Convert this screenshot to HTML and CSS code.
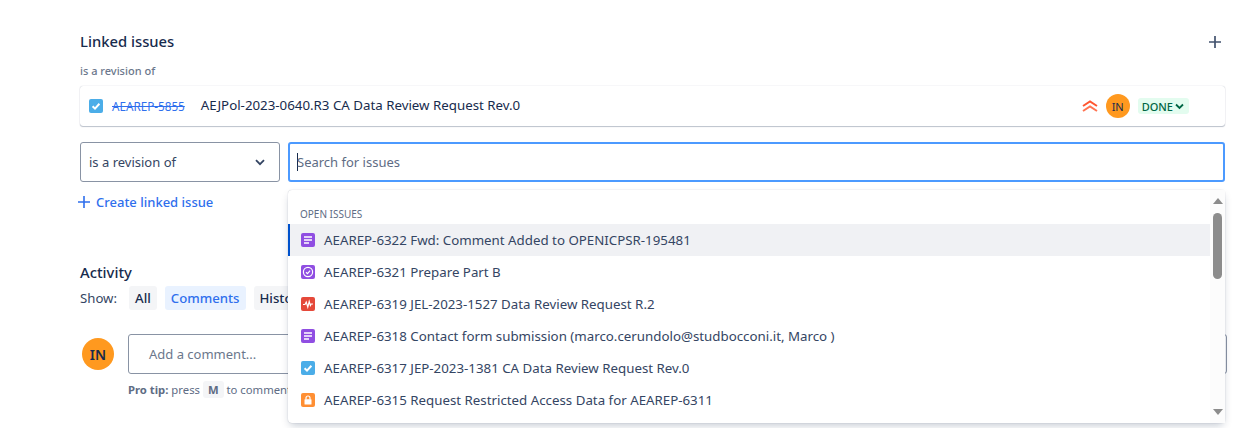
FILE: index.html
```html
<!DOCTYPE html>
<html lang="en">
<head>
    <meta charset="UTF-8">
    <meta name="viewport" content="width=device-width, initial-scale=1.0">
    <title>Linked issues</title>
    <link rel="stylesheet" href="styles.css">
</head>
<body>
    <div class="page">
      <section class="linked">
        <div class="linked-head">
          <h2>Linked issues</h2>
          <svg class="add-icon" width="14" height="14" viewBox="0 0 14 14"><path d="M7 1v12M1 7h12" stroke="#42526e" stroke-width="1.7" fill="none"/></svg>
        </div>
        <div class="relation">is a revision of</div>
        <div class="issue-card">
          <span class="type type-task">
            <svg width="14" height="14" viewBox="0 0 14 14"><path d="M3.6 7.2l2.4 2.4 4.4-4.8" stroke="#fff" stroke-width="2" fill="none"/></svg>
          </span>
          <a class="issue-key">AEAREP-5855</a>
          <span class="issue-title">AEJPol-2023-0640.R3 CA Data Review Request Rev.0</span>
          <svg class="priority" width="18" height="14" viewBox="0 0 18 14"><path d="M2 7l7-4.5L16 7" stroke="#ff5630" stroke-width="2" fill="none"/><path d="M2 12l7-4.5L16 12" stroke="#ff7452" stroke-width="2" fill="none"/></svg>
          <span class="avatar avatar-small">IN</span>
          <span class="status">DONE
            <svg width="9" height="7" viewBox="0 0 9 7"><path d="M1 1.5l3.5 3.5L8 1.5" stroke="#006644" stroke-width="1.8" fill="none"/></svg>
          </span>
        </div>
        <div class="link-form">
          <div class="select">
            <span>is a revision of</span>
            <svg width="10" height="7" viewBox="0 0 10 7"><path d="M1 1.2l4 4 4-4" stroke="#344563" stroke-width="1.8" fill="none"/></svg>
          </div>
          <div class="search">
            <span class="caret"></span>
            <span>Search for issues</span>
          </div>
          <div class="menu">
            <div class="menu-list">
              <div class="menu-label">OPEN ISSUES</div>
              <div class="menu-item active">
                <span class="type type-story"><svg width="14" height="14" viewBox="0 0 14 14"><path d="M3 4h8M3 7h8M3 10h5" stroke="#fff" stroke-width="1.4" fill="none"/></svg></span>
                <span>AEAREP-6322 Fwd: Comment Added to OPENICPSR-195481</span>
              </div>
              <div class="menu-item">
                <span class="type type-story"><svg width="14" height="14" viewBox="0 0 14 14"><circle cx="7" cy="7" r="4.6" stroke="#fff" stroke-width="1.2" fill="none"/><path d="M5 7.2l1.5 1.4 2.6-3" stroke="#fff" stroke-width="1.2" fill="none"/></svg></span>
                <span>AEAREP-6321 Prepare Part B</span>
              </div>
              <div class="menu-item">
                <span class="type type-bug"><svg width="14" height="14" viewBox="0 0 14 14"><path d="M2 7.5h2l1.2-2.5 1.6 5 1.4-5.5 1.2 4 .8-1.5H12" stroke="#fff" stroke-width="1.2" fill="none"/></svg></span>
                <span>AEAREP-6319 JEL-2023-1527 Data Review Request R.2</span>
              </div>
              <div class="menu-item">
                <span class="type type-story"><svg width="14" height="14" viewBox="0 0 14 14"><path d="M3 4h8M3 7h8M3 10h5" stroke="#fff" stroke-width="1.4" fill="none"/></svg></span>
                <span>AEAREP-6318 Contact form submission (marco.cerundolo@studbocconi.it, Marco )</span>
              </div>
              <div class="menu-item">
                <span class="type type-task"><svg width="14" height="14" viewBox="0 0 14 14"><path d="M3.6 7.2l2.4 2.4 4.4-4.8" stroke="#fff" stroke-width="2" fill="none"/></svg></span>
                <span>AEAREP-6317 JEP-2023-1381 CA Data Review Request Rev.0</span>
              </div>
              <div class="menu-item">
                <span class="type type-access"><svg width="14" height="14" viewBox="0 0 14 14"><rect x="3.5" y="6.2" width="7" height="5.3" rx=".6" fill="#fff"/><path d="M5 6.5V5a2 2 0 0 1 4 0v1.5" stroke="#fff" stroke-width="1.2" fill="none"/></svg></span>
                <span>AEAREP-6315 Request Restricted Access Data for AEAREP-6311</span>
              </div>
            </div>
            <div class="scrollbar">
              <span class="arrow-up"></span>
              <span class="thumb"></span>
              <span class="arrow-down"></span>
            </div>
          </div>
        </div>
        <a class="create-link">
          <svg width="12" height="12" viewBox="0 0 12 12"><path d="M6 0v12M0 6h12" stroke="#2f6fed" stroke-width="1.6" fill="none"/></svg>
          Create linked issue
        </a>
      </section>

      <section class="activity">
        <h3>Activity</h3>
        <div class="show-row">
          <span class="show-label">Show:</span>
          <span class="tab">All</span>
          <span class="tab tab-on">Comments</span>
          <span class="tab">History</span>
        </div>
        <div class="comment-row">
          <span class="avatar avatar-big">IN</span>
          <div class="comment-main">
            <div class="comment-box">Add a comment...</div>
            <div class="tip"><b>Pro tip:</b> press <kbd>M</kbd> to comment</div>
          </div>
        </div>
      </section>
    </div>
</body>
</html>
```

FILE: styles.css
```css
body{
  margin: 0;
  background-color: white;
  color: #172b4d;
  font-family: "Noto Sans", sans-serif;
  font-size: 14px;
  height: 428px;
  overflow: hidden;
}

.page{
  padding: 31px 12px 0 80px;
}

h2,h3{
  margin: 0;
  font-size: 14.8px;
  font-weight: 500;
  line-height: 20px;
}

.linked-head{
  display: flex;
  justify-content: space-between;
  align-items: center;
  padding-right: 3px;
}

.add-icon{
  margin-top: 2px;
}

.relation{
  margin-top: 13px;
  font-size: 11px;
  font-weight: 500;
  line-height: 14px;
  color: #6b778c;
}

.issue-card{
  display: flex;
  align-items: center;
  height: 40px;
  margin-top: 8px;
  padding-left: 9px;
  border-radius: 3px;
  background: white;
  box-shadow: 0 1px 1px rgba(9,30,66,.25), 0 0 1px rgba(9,30,66,.31);
}

.type{
  display: flex;
  flex: none;
  width: 14px;
  height: 14px;
  border-radius: 2px;
}
.type-task{ background-color: #4bade8; }
.type-story{ background-color: #904ee2; }
.type-bug{ background-color: #e5493a; }
.type-access{ background-color: #ff8f33; }

.issue-key{
  margin-left: 9px;
  font-size: 11.7px;
  color: #2f6fed;
  text-decoration: line-through;
}

.issue-title{
  flex: 1;
  margin-left: 16px;
  margin-bottom: 2px;
  font-size: 13.3px;
}

.priority{
  margin-right: 7px;
}

.avatar{
  display: flex;
  align-items: center;
  justify-content: center;
  flex: none;
  border-radius: 50%;
  background-color: #ff991f;
  color: #172b4d;
}
.avatar-small{
  width: 24px;
  height: 24px;
  font-size: 11px;
}
.avatar-big{
  width: 32px;
  height: 32px;
  margin-top: 4px;
  font-size: 14px;
  font-weight: 600;
}

.status{
  display: flex;
  align-items: center;
  gap: 2px;
  height: 16px;
  margin: 0 36px 0 8px;
  padding: 0 5px 0 4px;
  border-radius: 3px;
  background-color: #e3fcef;
  color: #006644;
  font-size: 11px;
  font-weight: 500;
}

.link-form{
  position: relative;
  display: flex;
  gap: 8px;
  margin-top: 16px;
}

.select{
  display: flex;
  align-items: center;
  justify-content: space-between;
  box-sizing: border-box;
  width: 200px;
  height: 40px;
  padding: 0 14px 0 8px;
  border: 1px solid #8993a4;
  border-radius: 3px;
  font-size: 13px;
  color: #344563;
}

.search{
  display: flex;
  align-items: center;
  flex: 1;
  box-sizing: border-box;
  height: 40px;
  padding-left: 7px;
  border: 2px solid #4c9aff;
  border-radius: 3px;
  font-size: 13px;
  color: #5e6c84;
}

.caret{
  width: 1px;
  height: 18px;
  margin-right: -1px;
  background-color: #172b4d;
}

.menu{
  position: absolute;
  z-index: 5;
  top: 48px;
  left: 208px;
  right: 0;
  display: flex;
  height: 233px;
  border-radius: 4px;
  background: white;
  box-shadow: 0 4px 8px -2px rgba(9,30,66,.25), 0 0 1px rgba(9,30,66,.31);
}

.menu-list{
  flex: 1;
}

.menu-label{
  padding: 17px 0 0 12px;
  height: 17px;
  font-size: 10px;
  line-height: 14px;
  color: #5e6c84;
}

.menu-item{
  display: flex;
  align-items: center;
  gap: 9px;
  box-sizing: border-box;
  height: 32px;
  padding-left: 13px;
  font-size: 13.3px;
  color: #344563;
  white-space: nowrap;
}

.menu-item.active{
  padding-left: 11px;
  border-left: 2px solid #0052cc;
  background-color: #f0f1f4;
}

.scrollbar{
  display: flex;
  flex-direction: column;
  align-items: center;
  box-sizing: border-box;
  width: 15px;
  padding: 8px 0;
  background-color: #fcfcfc;
}

.thumb{
  width: 9px;
  height: 66px;
  margin-top: 9px;
  border-radius: 5px;
  background-color: #8c8c8c;
}

.arrow-up,.arrow-down{
  width: 0;
  height: 0;
  border-left: 5px solid transparent;
  border-right: 5px solid transparent;
}
.arrow-up{ border-bottom: 6px solid #8c8c8c; }
.arrow-down{
  margin-top: auto;
  border-top: 6px solid #8c8c8c;
}

.create-link{
  display: flex;
  align-items: center;
  gap: 6px;
  margin: 10px 0 0 -2px;
  line-height: 20px;
  font-size: 13px;
  font-weight: 500;
  color: #2f6fed;
}

.activity{
  margin-top: 50px;
}

.show-row{
  display: flex;
  align-items: center;
  gap: 8px;
  margin-top: 4px;
  font-size: 13.2px;
}
.show-label{
  margin-right: 4px;
  color: #344563;
}

.tab{
  padding: 0 6px;
  line-height: 24px;
  border-radius: 3px;
  background-color: #f4f5f7;
  font-weight: 500;
}
.tab-on{
  background-color: #e9f2ff;
  color: #2f6fed;
}

.comment-row{
  display: flex;
  gap: 14px;
  margin-top: 24px;
  margin-left: 2px;
  margin-right: -2px;
}

.comment-main{
  flex: 1;
}

.comment-box{
  box-sizing: border-box;
  height: 40px;
  padding-left: 20px;
  border: 1px solid #8993a4;
  border-radius: 3px;
  line-height: 38px;
  font-size: 13px;
  color: #6b778c;
}

.tip{
  margin-top: 8px;
  font-size: 11.3px;
  line-height: 16px;
  color: #5e6c84;
}

kbd{
  padding: 1px 5px;
  border-radius: 3px;
  background-color: #f4f5f7;
  font-family: inherit;
  font-weight: 700;
}
```
